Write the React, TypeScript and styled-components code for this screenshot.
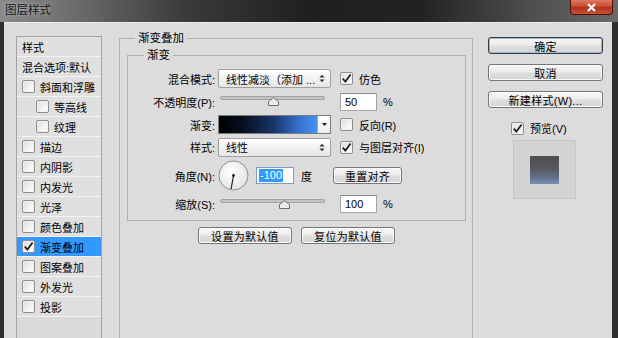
import React from "react";
import styled, { createGlobalStyle } from "styled-components";

const GlobalStyle = createGlobalStyle`
  html, body {
    margin: 0;
    padding: 0;
    background: #2b2b2b;
  }
  body {
    font-family: "Liberation Sans", "Noto Sans CJK SC", sans-serif;
    font-size: 11px;
    color: #000;
  }
  * {
    box-sizing: border-box;
  }
`;

type Layer = { name: string; check?: boolean; checked?: boolean; indent?: boolean; selected?: boolean };

const layers: Layer[] = [
    { name: "样式" },
    { name: "混合选项:默认" },
    { name: "斜面和浮雕", check: true },
    { name: "等高线", check: true, indent: true },
    { name: "纹理", check: true, indent: true },
    { name: "描边", check: true },
    { name: "内阴影", check: true },
    { name: "内发光", check: true },
    { name: "光泽", check: true },
    { name: "颜色叠加", check: true },
    { name: "渐变叠加", check: true, checked: true, selected: true },
    { name: "图案叠加", check: true },
    { name: "外发光", check: true },
    { name: "投影", check: true },
];

const Check = ({ checked }: { checked?: boolean }) => (
    <CheckBox>
        {checked && (
            <svg width="11" height="11" viewBox="0 0 11 11">
                <path d="M1.8 5.6 L4.4 8.6 L9.6 1.6" fill="none" stroke="#1a1a1a" strokeWidth="1.7"/>
            </svg>
        )}
    </CheckBox>
);

const SelectArrows = () => (
    <svg width="6" height="9" viewBox="0 0 6 9">
        <path d="M0.5 3.5 L3 0.8 L5.5 3.5 Z M0.5 5.5 L3 8.2 L5.5 5.5 Z" fill="#333"/>
    </svg>
);

const Slider = (props: { value: number }) => (
    <SliderWrap>
        <Track/>
        <Thumb style={{ left: `${props.value * 100}%` }}>
            <svg width="11" height="9" viewBox="0 0 11 9">
                <path d="M0.5 8.5 L0.5 4.5 L5.5 0.7 L10.5 4.5 L10.5 8.5 Z" fill="#ececec" stroke="#6e6e6e"/>
            </svg>
        </Thumb>
    </SliderWrap>
);

const Dial = () => (
    <svg width="31" height="31" viewBox="0 0 31 31">
        <defs>
            <radialGradient id="dialFill" cx="0.4" cy="0.35" r="0.7">
                <stop offset="0" stopColor="#ffffff"/>
                <stop offset="1" stopColor="#e2e2e2"/>
            </radialGradient>
        </defs>
        <circle cx="15.5" cy="15.5" r="14.5" fill="url(#dialFill)" stroke="#8c8c8c"/>
        <line x1="15.5" y1="15.5" x2="13.1" y2="29" stroke="#1e1e1e" strokeWidth="1.2"/>
        <circle cx="15.5" cy="15.5" r="1.4" fill="#1e1e1e"/>
    </svg>
);

export default function App() {
    return (
        <Window>
            <GlobalStyle/>
            <TitleBar>
                <Title>图层样式</Title>
                <CloseButton>
                    <svg width="11" height="9" viewBox="0 0 11 9">
                        <path d="M2 1 L9 8 M9 1 L2 8" stroke="#fff" strokeWidth="2.2"/>
                    </svg>
                </CloseButton>
            </TitleBar>
            <Body>
                <StyleList>
                    {layers.map((layer, index) => (
                        <StyleItem key={index} $selected={layer.selected} $indent={layer.indent}>
                            {layer.check && <Check checked={layer.checked}/>}
                            <span>{layer.name}</span>
                        </StyleItem>
                    ))}
                </StyleList>

                <OuterGroup>
                    <GroupTitle $offset={8}>渐变叠加</GroupTitle>
                    <InnerGroup>
                        <GroupTitle $offset={16}>渐变</GroupTitle>
                        <FormGrid>
                            <Label>混合模式:</Label>
                            <Select>
                                <span>线性减淡（添加 ...</span>
                                <SelectArrows/>
                            </Select>
                            <Side>
                                <Check checked/>
                                <span>仿色</span>
                            </Side>

                            <Label>不透明度(P):</Label>
                            <Slider value={0.5}/>
                            <Side>
                                <NumberInput>50</NumberInput>
                                <span>%</span>
                            </Side>

                            <Label>渐变:</Label>
                            <GradientPicker>
                                <GradientFill/>
                                <DropSegment>
                                    <svg width="5" height="3" viewBox="0 0 5 3">
                                        <path d="M0 0 L5 0 L2.5 3 Z" fill="#222"/>
                                    </svg>
                                </DropSegment>
                            </GradientPicker>
                            <Side>
                                <Check/>
                                <span>反向(R)</span>
                            </Side>

                            <Label>样式:</Label>
                            <Select>
                                <span>线性</span>
                                <SelectArrows/>
                            </Select>
                            <Side>
                                <Check checked/>
                                <span>与图层对齐(I)</span>
                            </Side>

                            <Label>角度(N):</Label>
                            <AngleRow>
                                <Dial/>
                                <AngleInput><Selected>-100</Selected></AngleInput>
                                <Unit>度</Unit>
                                <Button $width={69}>重置对齐</Button>
                            </AngleRow>

                            <Label>缩放(S):</Label>
                            <Slider value={0.61}/>
                            <Side>
                                <NumberInput>100</NumberInput>
                                <span>%</span>
                            </Side>
                        </FormGrid>
                    </InnerGroup>
                    <DefaultsRow>
                        <Button $width={94}>设置为默认值</Button>
                        <Button $width={94}>复位为默认值</Button>
                    </DefaultsRow>
                </OuterGroup>

                <Actions>
                    <Button $primary>确定</Button>
                    <Button>取消</Button>
                    <Button>新建样式(W)...</Button>
                    <PreviewToggle>
                        <Check checked/>
                        <span>预览(V)</span>
                    </PreviewToggle>
                    <PreviewBox>
                        <PreviewSwatch/>
                    </PreviewBox>
                </Actions>
            </Body>
        </Window>
    );
}

const Window = styled.div`
    width: 618px;
    height: 338px;
    overflow: hidden;
    display: flex;
    flex-direction: column;
    background: #2e2e2e;
`

const TitleBar = styled.div`
    height: 22px;
    flex-shrink: 0;
    display: flex;
    align-items: flex-start;
    justify-content: space-between;
    padding-left: 5px;
    background: linear-gradient(90deg, #8a8a8a 0%, #6c6c6c 12%, #3a3a3a 30%, #1f1f1f 50%, #222 68%, #4c4c4c 85%, #6a6a6a 100%);
`

const Title = styled.div`
    font-size: 11.5px;
    line-height: 20px;
    color: #151515;
    text-shadow: 0 0 4px rgba(255, 255, 255, 0.55);
`

const CloseButton = styled.div`
    width: 43px;
    height: 15px;
    margin-right: 5px;
    display: flex;
    align-items: center;
    justify-content: center;
    border: 1px solid #4a1208;
    border-top: none;
    border-radius: 0 0 4px 4px;
    background: linear-gradient(180deg, #dc7a62 0%, #c94a31 45%, #b3301c 55%, #c6523a 100%);
`

const Body = styled.div`
    flex: 1;
    display: flex;
    align-items: flex-start;
    margin: 0 6px 0 4px;
    padding: 7px 0 0 12px;
    background: #dcdcdc;
    border-top: 1px solid #ececec;
`

const StyleList = styled.ul`
    align-self: stretch;
    width: 86px;
    margin: 6px 0 0;
    padding: 0;
    list-style: none;
    background: #dadada;
    border: 1px solid #a4a4a4;
    border-bottom: none;
`

const StyleItem = styled.li<{ $selected?: boolean; $indent?: boolean }>`
    height: 20px;
    display: flex;
    align-items: center;
    gap: 5px;
    padding-left: ${props => props.$indent ? "19px" : "5px"};
    font-size: 11px;
    white-space: nowrap;
    background: ${props => props.$selected ? "#3399ff" : "#e0e0e0"};
    border-bottom: 1px solid #f3f3f3;
`

const CheckBox = styled.span`
    width: 13px;
    height: 13px;
    flex-shrink: 0;
    display: flex;
    align-items: center;
    justify-content: center;
    border: 1px solid #8e8e8e;
    border-radius: 2px;
    background: linear-gradient(135deg, #dcdcdc 0%, #f7f7f7 70%, #fff 100%);
    box-shadow: inset 0 0 0 1px #f2f2f2;
`

const OuterGroup = styled.fieldset`
    width: 354px;
    height: 330px;
    flex-shrink: 0;
    margin: 0 0 0 17px;
    padding: 1px 6px 0 7px;
    border: 1px solid #b0b0b0;
`

const InnerGroup = styled.fieldset`
    margin: 0;
    padding: 6px 0 7px 0;
    border: 1px solid #b0b0b0;
`

const GroupTitle = styled.legend<{ $offset: number }>`
    margin-left: ${props => props.$offset}px;
    padding: 0 3px;
    font-size: 11.5px;
    line-height: 16px;
`

const FormGrid = styled.div`
    display: grid;
    grid-template-columns: 90px 113px 1fr;
    grid-template-rows: 19px 19px 19px 18px 31px 18px;
    row-gap: 4px;
    align-items: center;
`

const Label = styled.div`
    text-align: right;
    padding-right: 3px;
    white-space: nowrap;
    font-size: 11px;
`

const Side = styled.div`
    display: flex;
    align-items: center;
    gap: 6px;
    padding-left: 9px;
    white-space: nowrap;
    font-size: 11px;
`

const Select = styled.div`
    height: 19px;
    display: flex;
    align-items: center;
    justify-content: space-between;
    padding: 0 5px 0 7px;
    border: 1px solid #a0a0a0;
    border-radius: 2px;
    background: linear-gradient(180deg, #ffffff 0%, #f1f1f1 55%, #e6e6e6 100%);
    font-size: 11px;
    white-space: nowrap;
`

const SliderWrap = styled.div`
    position: relative;
    height: 19px;
    margin: 0 6px 0 2px;
`

const Track = styled.div`
    position: absolute;
    left: 0;
    right: 0;
    top: 4px;
    height: 4px;
    border-radius: 2px;
    background: #c4c4c4;
    border: 1px solid #a2a2a2;
`

const Thumb = styled.div`
    position: absolute;
    top: 5px;
    width: 11px;
    height: 9px;
    margin-left: -5px;
    display: flex;
`

const NumberInput = styled.div`
    width: 37px;
    height: 18px;
    padding-left: 4px;
    line-height: 16px;
    border: 1px solid #a6a6a6;
    border-top-color: #8a8a8a;
    background: #fff;
    font-size: 11px;
`

const GradientPicker = styled.div`
    height: 19px;
    display: flex;
    border: 1px solid #7c7c7c;
`

const GradientFill = styled.div`
    flex: 1;
    background: linear-gradient(90deg, #000 0%, #07101f 25%, #173466 55%, #3572cf 82%, #4a90f2 100%);
`

const DropSegment = styled.div`
    width: 13px;
    display: flex;
    align-items: center;
    justify-content: center;
    border-left: 1px solid #a8a8a8;
    background: linear-gradient(180deg, #fff, #ececec);
`

const AngleRow = styled.div`
    grid-column: 2 / 4;
    display: flex;
    align-items: center;
    gap: 7px;
`

const AngleInput = styled.div`
    width: 38px;
    height: 17px;
    padding-left: 2px;
    display: flex;
    align-items: center;
    border: 1px solid #7a9ccf;
    background: #fff;
    font-size: 11px;
`

const Selected = styled.span`
    background: #3399ff;
    color: #fff;
    line-height: 13px;
    padding: 0 1px;
`

const Unit = styled.span`
    width: 12px;
    margin-right: 13px;
    font-size: 11px;
`

const Button = styled.div<{ $primary?: boolean; $width?: number }>`
    width: ${props => props.$width ? `${props.$width}px` : "100%"};
    height: 17px;
    flex-shrink: 0;
    display: flex;
    align-items: center;
    justify-content: center;
    border: 1px solid ${props => props.$primary ? "#3a3a3a" : "#767676"};
    border-radius: 3px;
    background: linear-gradient(180deg, #f7f7f7 0%, #ececec 48%, #dedede 52%, #d6d6d6 100%);
    box-shadow: ${props => props.$primary ? "inset 0 0 0 1px #9fb6d8" : "inset 0 0 0 1px #fafafa"};
    font-size: 11px;
    white-space: nowrap;
    letter-spacing: 0.3px;
`

const DefaultsRow = styled.div`
    display: flex;
    justify-content: center;
    gap: 9px;
    margin-top: 6px;
`

const Actions = styled.div`
    width: 115px;
    flex-shrink: 0;
    margin: 7px 0 0 15px;
    display: flex;
    flex-direction: column;
    gap: 10px;
`

const PreviewToggle = styled.div`
    display: flex;
    align-items: center;
    gap: 6px;
    margin: 2px 0 0 23px;
    font-size: 11px;
`

const PreviewBox = styled.div`
    width: 63px;
    height: 59px;
    margin: -6px 0 0 25px;
    display: flex;
    align-items: center;
    justify-content: center;
    background: #d3d3d3;
    border: 1px solid #c6c6c6;
`

const PreviewSwatch = styled.div`
    width: 29px;
    height: 28px;
    background: linear-gradient(180deg, #4e4e4e 0%, #565860 45%, #65738d 80%, #7890b8 100%);
`
